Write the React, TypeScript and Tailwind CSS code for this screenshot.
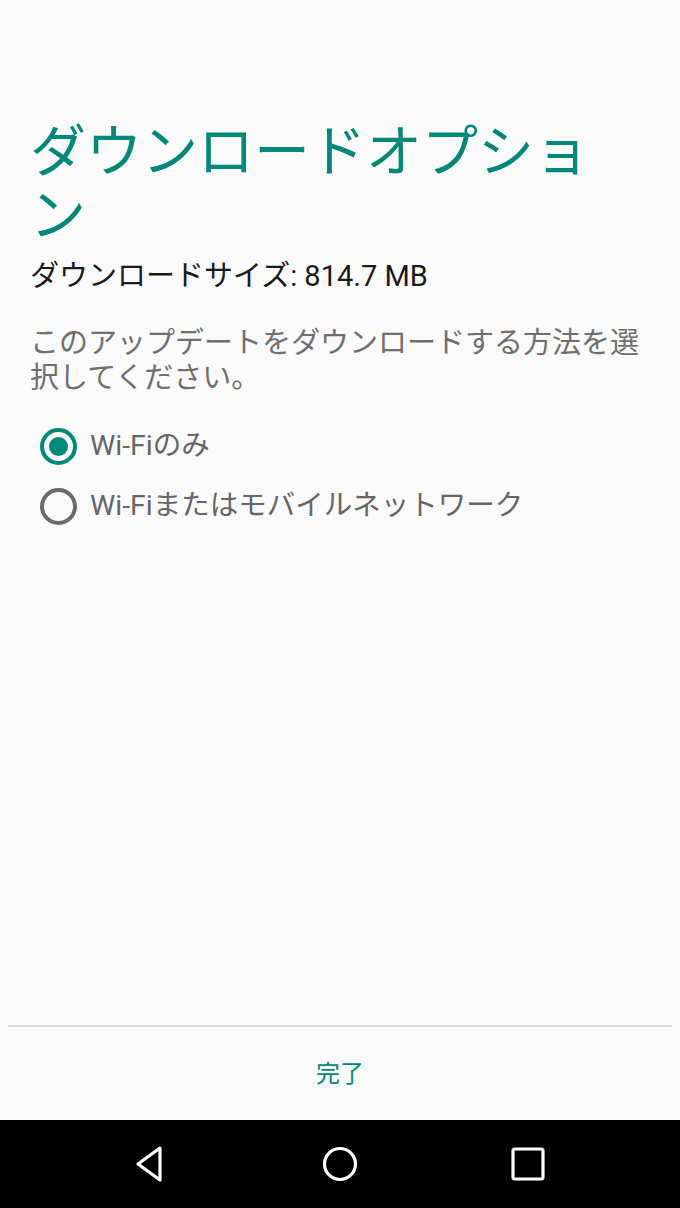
import { useState } from "react";

const OPTIONS = ["Wi-Fiのみ", "Wi-Fiまたはモバイルネットワーク"];

export default function App() {
  const [selected, setSelected] = useState(0);

  return (
    <div
      className="flex h-[1208px] w-[680px] flex-col bg-[#fafafa]"
      style={{ fontFamily: "Roboto, 'Noto Sans CJK JP', sans-serif" }}
    >
      <div className="flex-1 pl-[30px] pr-[40px] pt-[120px]">
        <h1 className="text-[56px] leading-[64px] font-normal text-[#00897b]">
          ダウンロードオプション
        </h1>
        <p className="mt-[10px] text-[29px] leading-[36px] text-[#1a1a1a]">
          ダウンロードサイズ: 814.7 MB
        </p>
        <p className="mt-[32px] text-[29px] leading-[35px] text-[#6f6f6f]">
          このアップデートをダウンロードする方法を選択してください。
        </p>

        <div className="mt-[20px] flex flex-col">
          {OPTIONS.map((label, i) => (
            <button
              key={label}
              onClick={() => setSelected(i)}
              className="flex h-[60px] items-center gap-[13px] pl-[10px] text-left"
            >
              <span
                className={
                  i === selected
                    ? "flex h-[37px] w-[37px] items-center justify-center rounded-full border-[4px] border-[#00897b]"
                    : "flex h-[37px] w-[37px] items-center justify-center rounded-full border-[4px] border-[#6b6b6b]"
                }
              >
                {i === selected && <span className="h-[19px] w-[19px] rounded-full bg-[#00897b]" />}
              </span>
              <span className="text-[28.5px] leading-[36px] text-[#666666]">{label}</span>
            </button>
          ))}
        </div>
      </div>

      <div className="mx-[8px] h-[2px] bg-[#dedede]" />
      <button className="flex h-[93px] items-center justify-center text-[24px] text-[#00897b]">
        完了
      </button>

      <nav className="flex h-[88px] items-center justify-center gap-[148px] bg-black">
        <svg width="40" height="40" viewBox="0 0 40 40" fill="none">
          <path d="M28 4 L6 20 L28 36 Z" stroke="white" strokeWidth="3.2" strokeLinejoin="round" />
        </svg>
        <svg width="40" height="40" viewBox="0 0 40 40" fill="none">
          <circle cx="20" cy="20" r="15.5" stroke="white" strokeWidth="3.2" />
        </svg>
        <svg width="40" height="40" viewBox="0 0 40 40" fill="none">
          <rect x="5" y="5" width="30" height="30" rx="2" stroke="white" strokeWidth="3.2" />
        </svg>
      </nav>
    </div>
  );
}
